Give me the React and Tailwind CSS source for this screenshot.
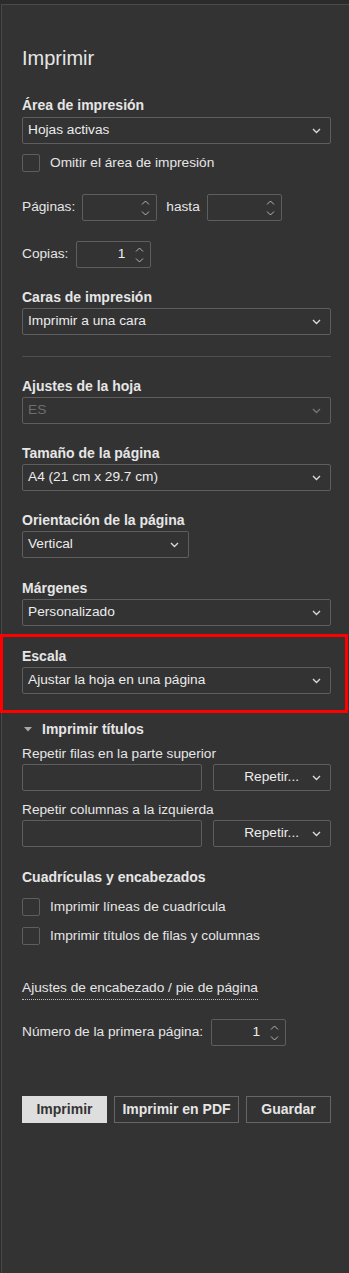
import React from 'react';

const Chevron = ({ className = '' }) => (
  <svg width="9" height="6" viewBox="0 0 9 6" className={className}>
    <path d="M1 1l3.5 3.5L8 1" fill="none" stroke="#d8d8d8" strokeWidth="1.4" />
  </svg>
);

const SpinArrows = () => (
  <div className="flex flex-col items-center gap-[6px] pr-[6px]">
    <svg width="9" height="5" viewBox="0 0 9 5">
      <path d="M1 4.5l3.5-3.5L8 4.5" fill="none" stroke="#b5b5b5" strokeWidth="1" />
    </svg>
    <svg width="9" height="5" viewBox="0 0 9 5">
      <path d="M1 .5l3.5 3.5L8 .5" fill="none" stroke="#b5b5b5" strokeWidth="1" />
    </svg>
  </div>
);

const Label = ({ children, className = '' }) => (
  <div className={`text-[14px] leading-[16px] font-bold text-[#e6e6e6] ${className}`}>{children}</div>
);

const Select = ({ value, disabled, className = 'w-full' }) => (
  <div
    className={`h-[27px] flex items-center justify-between pl-[5px] pr-[9px] border border-[#5e5e5e] rounded-[2px] ${className}`}
  >
    <span className={`text-[13.7px] ${disabled ? 'text-[#6e6e6e]' : 'text-[#ececec]'}`}>{value}</span>
    <Chevron className={disabled ? 'opacity-40' : ''} />
  </div>
);

const Spin = ({ value = '', width = 'w-[75px]' }) => (
  <div className={`h-[27px] ${width} flex items-center justify-end border border-[#5e5e5e] rounded-[2px]`}>
    <span className="text-[13.7px] text-[#ececec] pr-[10px]">{value}</span>
    <SpinArrows />
  </div>
);

const Check = ({ label }) => (
  <div className="flex items-center h-[18px]">
    <div className="w-[18px] h-[18px] border border-[#5e5e5e] rounded-[2px]" />
    <span className="ml-[10px] text-[13.7px] text-[#e6e6e6]">{label}</span>
  </div>
);

const App = () => {
  return (
    <div className="h-[1273px] bg-[#2b2b2b] pt-[4px] pl-px font-['Liberation_Sans',Arial,sans-serif] overflow-hidden">
      <div className="h-full bg-[#333333] border-l border-t border-[#4a4a4a] pl-[20px] pr-[18px] pt-[41px]">
        <div className="text-[20px] leading-[24px] text-[#e6e6e6]">Imprimir</div>

        {/* Área de impresión */}
        <Label className="mt-[27px]">Área de impresión</Label>
        <Select value="Hojas activas" className="w-full mt-[4px]" />
        <div className="mt-[10px]">
          <Check label="Omitir el área de impresión" />
        </div>

        {/* Páginas */}
        <div className="mt-[22px] flex items-center text-[13.7px] text-[#e6e6e6]">
          <span>Páginas:</span>
          <div className="ml-[7px]">
            <Spin />
          </div>
          <span className="ml-[9px]">hasta</span>
          <div className="ml-[7px]">
            <Spin />
          </div>
        </div>

        <div className="mt-[20px] flex items-center text-[13.7px] text-[#e6e6e6]">
          <span>Copias:</span>
          <div className="ml-[8px]">
            <Spin value="1" />
          </div>
        </div>

        <Label className="mt-[21px]">Caras de impresión</Label>
        <Select value="Imprimir a una cara" className="w-full mt-[3px]" />

        <div className="mt-[21px] border-t border-[#4f4f4f]" />

        <Label className="mt-[21px]">Ajustes de la hoja</Label>
        <Select value="ES" disabled className="w-full mt-[3px]" />

        <Label className="mt-[21px]">Tamaño de la página</Label>
        <Select value="A4 (21 cm x 29.7 cm)" className="w-full mt-[3px]" />

        <Label className="mt-[21px]">Orientación de la página</Label>
        <Select value="Vertical" className="w-[167px] mt-[3px]" />

        <Label className="mt-[22px]">Márgenes</Label>
        <Select value="Personalizado" className="w-full mt-[3px]" />

        {/* Escala (highlighted) */}
        <div className="mt-[8px] -ml-[22px] -mr-[17px] pl-[19px] pr-[14px] pt-[11px] pb-[16px] border-[3px] border-[#ff0000]">
          <Label>Escala</Label>
          <Select value="Ajustar la hoja en una página" className="w-full mt-[3px]" />
        </div>

        {/* Imprimir títulos */}
        <div className="mt-[8px] flex items-center">
          <svg width="8" height="5" viewBox="0 0 8 5" className="ml-[2px]">
            <path d="M0 0h8L4 4.5z" fill="#a8a8a8" />
          </svg>
          <span className="ml-[10px] text-[14px] leading-[16px] font-bold text-[#e6e6e6]">Imprimir títulos</span>
        </div>

        <div className="mt-[9px] text-[13.7px] leading-[16px] text-[#e6e6e6]">Repetir filas en la parte superior</div>
        <div className="mt-[2px] flex gap-[11px]">
          <div className="h-[27px] w-[180px] border border-[#5e5e5e] rounded-[2px]" />
          <div className="h-[27px] flex-1 flex items-center justify-end pr-[9px] border border-[#5e5e5e] rounded-[2px]">
            <span className="text-[13.7px] text-[#ececec] mr-[13px]">Repetir...</span>
            <Chevron />
          </div>
        </div>

        <div className="mt-[11px] text-[13.7px] leading-[16px] text-[#e6e6e6]">Repetir columnas a la izquierda</div>
        <div className="mt-[2px] flex gap-[11px]">
          <div className="h-[27px] w-[180px] border border-[#5e5e5e] rounded-[2px]" />
          <div className="h-[27px] flex-1 flex items-center justify-end pr-[9px] border border-[#5e5e5e] rounded-[2px]">
            <span className="text-[13.7px] text-[#ececec] mr-[13px]">Repetir...</span>
            <Chevron />
          </div>
        </div>

        <Label className="mt-[22px]">Cuadrículas y encabezados</Label>
        <div className="mt-[13px] flex flex-col gap-[11px]">
          <Check label="Imprimir líneas de cuadrícula" />
          <Check label="Imprimir títulos de filas y columnas" />
        </div>

        <div className="mt-[30px]">
          <span className="inline-block text-[13.7px] leading-[16px] text-[#e6e6e6] pb-[3px] border-b border-dotted border-[#bdbdbd]">
            Ajustes de encabezado / pie de página
          </span>
        </div>

        <div className="mt-[19px] flex items-center text-[13.7px] text-[#e6e6e6]">
          <span>Número de la primera página:</span>
          <div className="ml-[8px]">
            <Spin value="1" />
          </div>
        </div>

        {/* Actions */}
        <div className="mt-[50px] flex items-center">
          <button className="h-[27px] w-[85px] bg-[#dedede] text-[#333333] text-[14px] font-bold">Imprimir</button>
          <button className="ml-[7px] h-[27px] w-[125px] border border-[#666666] text-[#e6e6e6] text-[14px] font-bold">
            Imprimir en PDF
          </button>
          <button className="ml-[7px] h-[27px] w-[85px] border border-[#666666] text-[#e6e6e6] text-[14px] font-bold">
            Guardar
          </button>
        </div>
      </div>
    </div>
  );
};

export default App;
